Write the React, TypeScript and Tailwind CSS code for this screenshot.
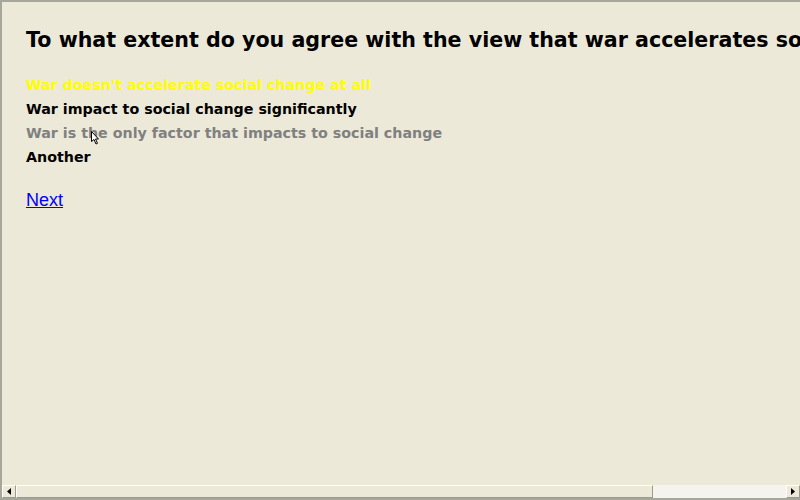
import React from 'react';

const options = [
  { text: "War doesn't accelerate social change at all", color: 'text-[#ffff00]' },
  { text: 'War impact to social change significantly', color: 'text-black' },
  { text: 'War is the only factor that impacts to social change', color: 'text-[#808080]' },
  { text: 'Another', color: 'text-black' },
];

function Arrow({ dir }: { dir: 'left' | 'right' }) {
  return (
    <div className="flex h-full w-[14px] shrink-0 items-center justify-center border-t border-l border-t-white border-l-white border-r border-b border-r-[#9d9b8f] border-b-[#9d9b8f] bg-[#ece9d8]">
      <svg width="4" height="7" viewBox="0 0 4 7">
        {dir === 'left' ? <polygon points="4,0 4,7 0,3.5" fill="#000" /> : <polygon points="0,0 0,7 4,3.5" fill="#000" />}
      </svg>
    </div>
  );
}

export default function App() {
  return (
    <div className="relative flex h-[500px] w-[800px] flex-col overflow-hidden border-t-2 border-l-2 border-b-2 border-[#a7a69b] bg-[#ece9d8]">
      <div className="flex-1 overflow-hidden pl-[24px] pt-[25px]">
        <h1 className="whitespace-nowrap text-[20.6px] font-bold leading-[26px] text-black" style={{ fontFamily: '"DejaVu Sans", sans-serif' }}>
          To what extent do you agree with the view that war accelerates social change?
        </h1>
        <ul className="mt-[20px] flex flex-col" style={{ fontFamily: '"DejaVu Sans", sans-serif' }}>
          {options.map((o) => (
            <li key={o.text} className={`h-[24px] whitespace-nowrap text-[14.25px] font-bold leading-[24px] ${o.color}`}>
              {o.text}
            </li>
          ))}
        </ul>
        <a href="#" className="mt-[20px] inline-block text-[18px] leading-[22px] text-[#0000ff] underline" style={{ fontFamily: '"Liberation Sans", sans-serif' }}>
          Next
        </a>
      </div>
      <div className="flex h-[13px] w-full shrink-0">
        <Arrow dir="left" />
        <div className="h-full w-[637px] shrink-0 border-t border-l border-t-white border-l-white border-r border-b border-r-[#9d9b8f] border-b-[#9d9b8f] bg-[#ece9d8]" />
        <div className="h-full flex-1 bg-[#f4f3ee]" />
        <Arrow dir="right" />
      </div>
      <svg className="absolute left-[89px] top-[129px]" width="8" height="14" viewBox="0 0 8 14">
        <polygon points="0.5,0.5 0.5,10.5 3,8.5 5,13 6.5,12.3 4.5,8 7.5,8" fill="#fff" stroke="#000" strokeWidth="1" />
      </svg>
    </div>
  );
}
